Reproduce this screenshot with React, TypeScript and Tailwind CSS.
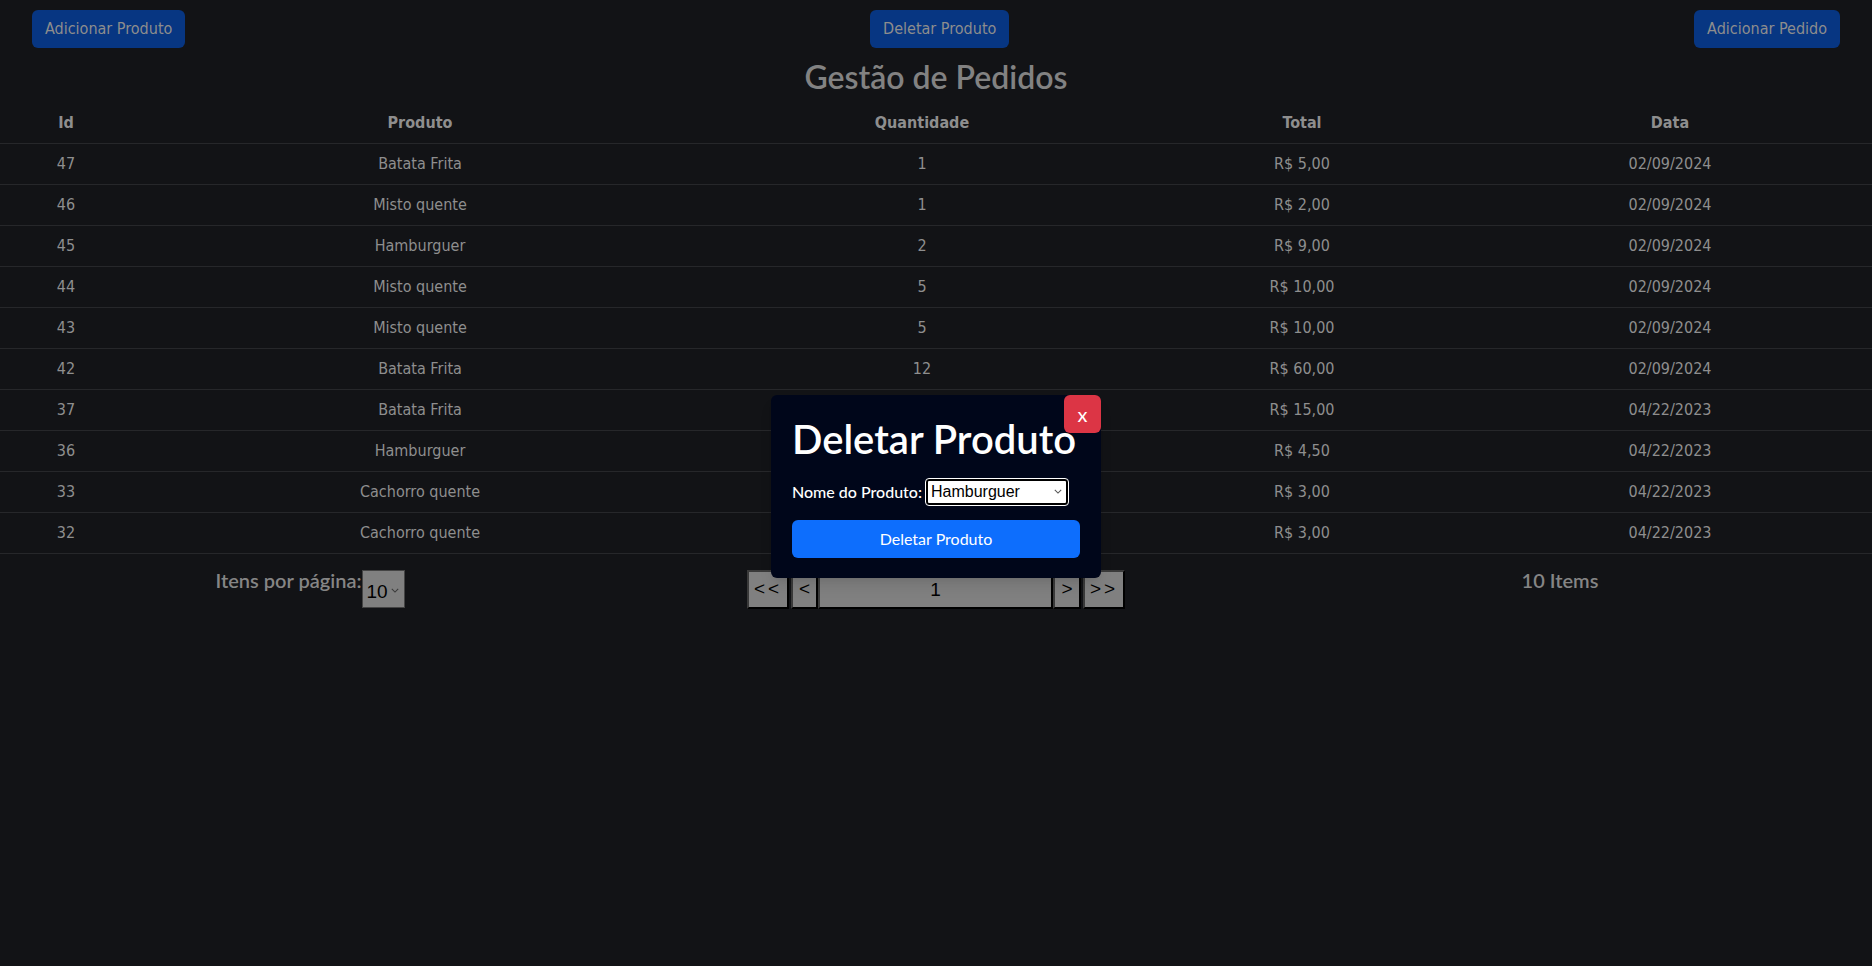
const pedidos = [
  { id: 47, produto: "Batata Frita", qtd: 1, total: "R$ 5,00", data: "02/09/2024" },
  { id: 46, produto: "Misto quente", qtd: 1, total: "R$ 2,00", data: "02/09/2024" },
  { id: 45, produto: "Hamburguer", qtd: 2, total: "R$ 9,00", data: "02/09/2024" },
  { id: 44, produto: "Misto quente", qtd: 5, total: "R$ 10,00", data: "02/09/2024" },
  { id: 43, produto: "Misto quente", qtd: 5, total: "R$ 10,00", data: "02/09/2024" },
  { id: 42, produto: "Batata Frita", qtd: 12, total: "R$ 60,00", data: "02/09/2024" },
  { id: 37, produto: "Batata Frita", qtd: 3, total: "R$ 15,00", data: "04/22/2023" },
  { id: 36, produto: "Hamburguer", qtd: 1, total: "R$ 4,50", data: "04/22/2023" },
  { id: 33, produto: "Cachorro quente", qtd: 1, total: "R$ 3,00", data: "04/22/2023" },
  { id: 32, produto: "Cachorro quente", qtd: 1, total: "R$ 3,00", data: "04/22/2023" },
];

const narrow = "font-['Liberation_Sans_Narrow','DejaVu_Sans_Condensed',Roboto,sans-serif]";

const Chevron = ({ className }: { className: string }) => (
  <svg viewBox="0 0 10 6" className={className} fill="none" stroke="currentColor" strokeWidth="1.3">
    <path d="M1 1l4 4 4-4" />
  </svg>
);

export default function App() {
  return (
    <div className="relative min-h-screen bg-[#121316] font-['Lato',sans-serif]">
      <TopBar />
      <h1 className="mb-[4px] pt-[6px] text-center text-[32px] leading-[45px] font-semibold text-[#828282]">
        Gestão de Pedidos
      </h1>
      <OrdersTable />
      <Footer />
      <DeleteModal />
    </div>
  );
}

const TopBar = () => {
  const btn = `${narrow} h-[38px] whitespace-nowrap rounded-md bg-[#073682] px-[13px] text-[16px] text-[#8d8d8d]`;
  return (
    <div className="flex items-start justify-between px-[32px] pt-[10px]">
      <button className={btn}>Adicionar Produto</button>
      <button className={btn}>Deletar Produto</button>
      <button className={btn}>Adicionar Pedido</button>
    </div>
  );
};

const OrdersTable = () => {
  return (
    <table className={`${narrow} w-full table-fixed border-collapse text-center text-[16px] text-[#8e8e8e]`}>
      <colgroup>
        <col className="w-[132px]" />
        <col className="w-[576px]" />
        <col className="w-[428px]" />
        <col className="w-[332px]" />
        <col className="w-[404px]" />
      </colgroup>
      <thead>
        <tr className="border-b border-[#26272a]">
          <th className="py-2 leading-6 font-bold">Id</th>
          <th className="py-2 leading-6 font-bold">Produto</th>
          <th className="py-2 leading-6 font-bold">Quantidade</th>
          <th className="py-2 leading-6 font-bold">Total</th>
          <th className="py-2 leading-6 font-bold">Data</th>
        </tr>
      </thead>
      <tbody>
        {pedidos.map((p) => (
          <tr key={p.id} className="border-b border-[#26272a]">
            <td className="py-2 leading-6">{p.id}</td>
            <td className="py-2 leading-6">{p.produto}</td>
            <td className="py-2 leading-6">{p.qtd}</td>
            <td className="py-2 leading-6">{p.total}</td>
            <td className="py-2 leading-6">{p.data}</td>
          </tr>
        ))}
      </tbody>
    </table>
  );
};

const Footer = () => {
  const pg =
    "h-[39px] border-2 border-t-[#3a3a3a] border-l-[#3a3a3a] border-r-black border-b-black bg-[#808080] text-[19px] text-black font-['Liberation_Sans',sans-serif]";
  return (
    <div className="mt-[16px] grid grid-cols-3">
      <div className="flex items-start justify-center pr-[4px]">
        <span className="mt-[-5px] text-[20px] leading-[30px] font-semibold text-[#858585]">Itens por página:</span>
        <div className="relative">
          <select className="h-[38px] w-[43px] appearance-none border border-[#444] bg-[#808080] pl-[4px] pt-[6px] text-[19px] text-black font-['Liberation_Sans',sans-serif]">
            <option>10</option>
          </select>
          <Chevron className="pointer-events-none absolute right-[6px] top-[18px] h-[5px] w-[8px] text-[#3a3a3a]" />
        </div>
      </div>
      <div className="flex justify-center">
        <button className={`${pg} w-[42px] tracking-[3px]`}>{"<<"}</button>
        <button className={`${pg} ml-[2px] w-[27px]`}>{"<"}</button>
        <div className={`${pg} flex w-[235px] items-center justify-center pt-[2px] text-[#1a1030]`}>1</div>
        <button className={`${pg} w-[28px]`}>{">"}</button>
        <button className={`${pg} ml-[2px] w-[42px] tracking-[3px]`}>{">>"}</button>
      </div>
      <div className="flex justify-center">
        <span className="mt-[-5px] text-[20px] leading-[30px] font-semibold text-[#858585]">10 Items</span>
      </div>
    </div>
  );
};

const DeleteModal = () => {
  return (
    <div className="absolute left-[771px] top-[395px] w-[330px] rounded-md bg-[#00061a] px-[21px] pb-[20px] pt-[20px] shadow-lg">
      <button className="absolute right-0 top-0 h-[38px] w-[37px] rounded-md bg-[#dc3545] text-[20px] text-white">
        x
      </button>
      <h2 className="text-[40px] font-semibold leading-[48px] text-white">Deletar Produto</h2>
      <div className="mt-[16px] flex items-center">
        <label className="text-[16px] font-medium text-white">Nome do Produto:</label>
        <div className="relative ml-[4px]">
          <select className="h-[26px] w-[142px] appearance-none rounded-[3px] border-2 border-black bg-white pl-[3px] text-[16px] leading-[20px] text-black outline outline-1 outline-white font-['Liberation_Sans',sans-serif]">
            <option>Hamburguer</option>
          </select>
          <Chevron className="pointer-events-none absolute right-[6px] top-[10px] h-[5px] w-[8px] text-[#555]" />
        </div>
      </div>
      <button className="mt-[15px] h-[38px] w-full rounded-md bg-[#0d6efd] text-[16px] text-white">
        Deletar Produto
      </button>
    </div>
  );
}
